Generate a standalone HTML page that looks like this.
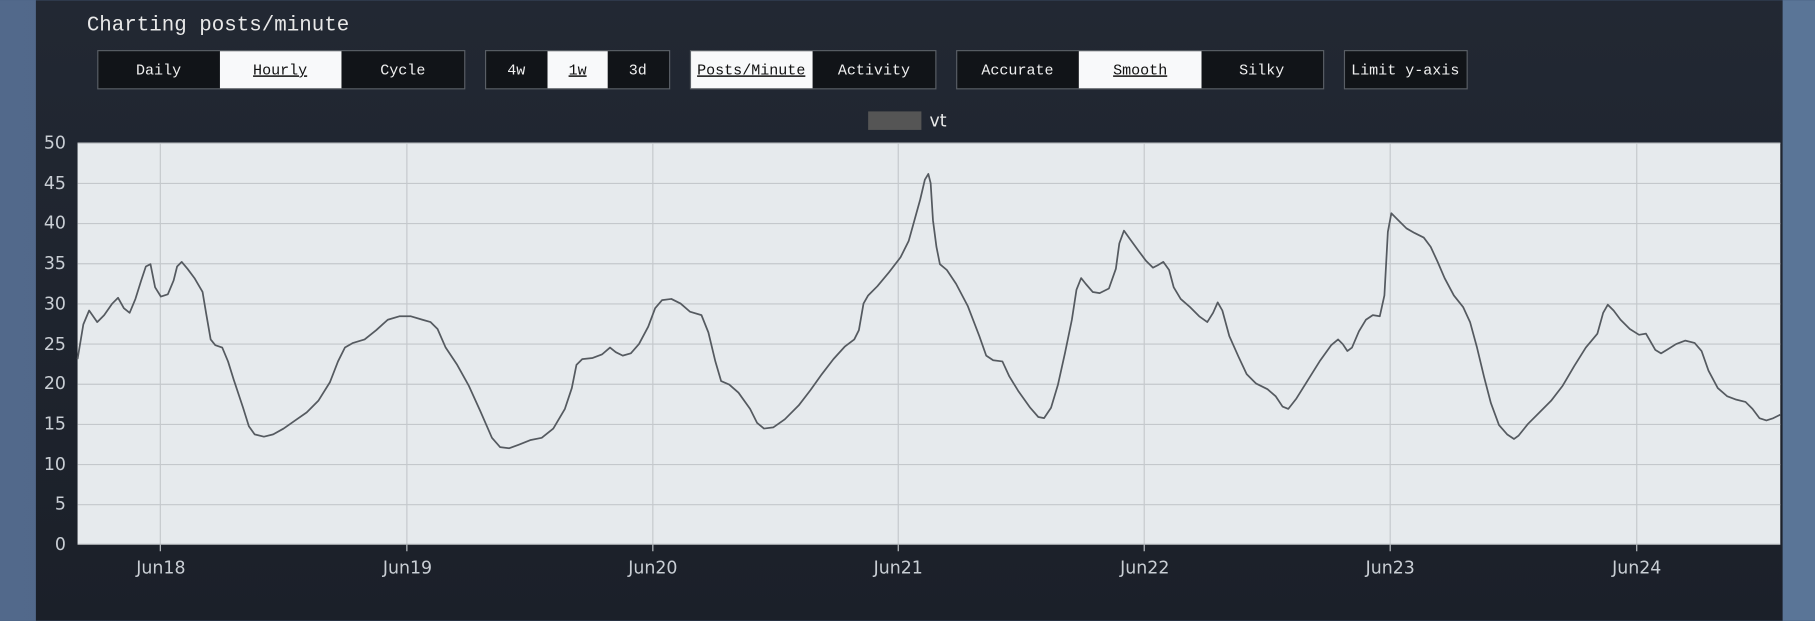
<!DOCTYPE html>
<html><head><meta charset="utf-8"><style>
html,body{margin:0;padding:0;width:1815px;height:621px;overflow:hidden;background:#4b6284}
svg{display:block}
</style></head><body>
<svg width="1815" height="621" viewBox="0 0 1568 536" xmlns="http://www.w3.org/2000/svg">
<defs>
<linearGradient id="bg" x1="0" x2="1" y1="0" y2="0"><stop offset="0" stop-color="#52698b"/><stop offset="1" stop-color="#3f5677"/></linearGradient>
<linearGradient id="pn" x1="0" x2="0" y1="0" y2="1"><stop offset="0" stop-color="#222833"/><stop offset="1" stop-color="#1b2029"/></linearGradient>
</defs>
<rect width="1568" height="536" fill="url(#bg)"/>
<rect x="1540" width="28" height="536" fill="#5a7597"/>
<rect x="31" width="1509" height="536" fill="url(#pn)"/>
<text x="75" y="26" font-family="Liberation Mono, monospace" font-size="18" fill="#e8e8e8">Charting posts/minute</text>
<g font-family="Liberation Mono, monospace" font-size="13" text-anchor="middle">
<g stroke="#5a5f66" stroke-width="1">
<rect x="84.5" y="43.5" width="317" height="33" fill="#111418"/>
<rect x="419.5" y="43.5" width="159" height="33" fill="#111418"/>
<rect x="596.5" y="43.5" width="212" height="33" fill="#111418"/>
<rect x="826.5" y="43.5" width="317" height="33" fill="#111418"/>
<rect x="1161.5" y="43.5" width="106" height="33" fill="#111418"/>
</g>
<rect x="190" y="44" width="105" height="32" fill="#f8f9fa"/>
<rect x="473" y="44" width="52" height="32" fill="#f8f9fa"/>
<rect x="597" y="44" width="105" height="32" fill="#f8f9fa"/>
<rect x="932" y="44" width="106" height="32" fill="#f8f9fa"/>
<g fill="#f0f0f0">
<text x="137" y="64">Daily</text><text x="348" y="64">Cycle</text>
<text x="446" y="64">4w</text><text x="551" y="64">3d</text>
<text x="755" y="64">Activity</text>
<text x="879" y="64">Accurate</text><text x="1090" y="64">Silky</text>
<text x="1214" y="64">Limit y-axis</text>
</g>
<g fill="#111" text-decoration="underline">
<text x="242" y="64">Hourly</text><text x="499" y="64">1w</text>
<text x="649" y="64">Posts/Minute</text><text x="985" y="64">Smooth</text>
</g>
</g>
<rect x="750" y="96" width="46" height="16" fill="#555"/>
<text x="803" y="109" font-family="DejaVu Sans, sans-serif" font-size="15" fill="#e8e8e8">vt</text>
<rect x="67" y="123" width="1471" height="347" fill="#e6eaed"/>
<g stroke="#c4c8cc" stroke-width="1">
<line x1="67" x2="1538" y1="123.5" y2="123.5"/><line x1="67" x2="1538" y1="158.2" y2="158.2"/>
<line x1="67" x2="1538" y1="192.9" y2="192.9"/><line x1="67" x2="1538" y1="227.6" y2="227.6"/>
<line x1="67" x2="1538" y1="262.3" y2="262.3"/><line x1="67" x2="1538" y1="297" y2="297"/>
<line x1="67" x2="1538" y1="331.7" y2="331.7"/><line x1="67" x2="1538" y1="366.4" y2="366.4"/>
<line x1="67" x2="1538" y1="401.1" y2="401.1"/><line x1="67" x2="1538" y1="435.8" y2="435.8"/>
<line x1="138.5" x2="138.5" y1="123" y2="476"/><line x1="351.5" x2="351.5" y1="123" y2="476"/>
<line x1="564" x2="564" y1="123" y2="476"/><line x1="776" x2="776" y1="123" y2="476"/>
<line x1="988.5" x2="988.5" y1="123" y2="476"/><line x1="1201" x2="1201" y1="123" y2="476"/>
<line x1="1414" x2="1414" y1="123" y2="476"/>
</g>
<line x1="67" x2="1538" y1="470" y2="470" stroke="#b0b4b8"/>
<g font-family="DejaVu Sans, sans-serif" font-size="15" fill="#c9ced4" text-anchor="end">
<text x="57" y="128">50</text><text x="57" y="163">45</text><text x="57" y="197">40</text>
<text x="57" y="232">35</text><text x="57" y="267">30</text><text x="57" y="302">25</text>
<text x="57" y="336">20</text><text x="57" y="371">15</text><text x="57" y="406">10</text>
<text x="57" y="440">5</text><text x="57" y="475">0</text>
</g>
<g font-family="DejaVu Sans, sans-serif" font-size="15" fill="#c9ced4" text-anchor="middle">
<text x="139" y="495">Jun18</text><text x="352" y="495">Jun19</text><text x="564" y="495">Jun20</text>
<text x="776" y="495">Jun21</text><text x="989" y="495">Jun22</text><text x="1201" y="495">Jun23</text>
<text x="1414" y="495">Jun24</text>
</g>
<polyline fill="none" stroke="#555a60" stroke-width="1.5" stroke-linejoin="round" points="67,310 72,280 77,268 84,278 90,272 97,262 102,257 107,266 112,270 117,258 122,242 126,230 130,228 134,248 139,256 145,254 150,242 153,230 157,226 162,232 168,240 175,252 178,270 182,293 186,298 192,300 197,312 202,328 210,352 215,368 220,375 228,377 236,375 245,370 255,363 265,356 275,346 285,330 292,312 298,300 305,296 315,293 325,285 335,276 345,273 355,273 365,276 372,278 378,284 385,300 395,315 405,333 415,355 425,378 432,386 440,387 448,384 458,380 468,378 478,370 488,353 494,335 498,315 503,310 512,309 520,306 527,300 532,304 538,307 545,305 552,297 560,282 566,266 572,259 580,258 588,262 596,269 606,272 612,287 618,312 623,329 630,332 638,339 648,353 654,365 660,370 668,369 678,362 690,350 700,337 710,323 720,310 730,299 738,293 742,285 746,262 750,255 758,247 768,235 778,222 785,208 790,190 795,172 799,155 802,150 804,158 806,190 809,213 812,228 818,233 826,245 836,264 846,290 852,307 858,311 866,312 872,325 880,338 890,352 897,360 902,361 908,352 914,332 920,305 926,276 930,250 934,240 938,245 944,252 950,253 958,249 964,232 967,210 971,199 976,206 984,217 990,225 996,231 1000,229 1005,226 1010,233 1014,248 1020,258 1028,265 1036,273 1043,278 1048,270 1052,261 1056,268 1062,290 1070,308 1077,323 1085,331 1095,336 1102,342 1108,351 1113,353 1120,344 1130,328 1140,312 1150,298 1156,293 1160,297 1164,303 1168,300 1174,286 1180,276 1186,272 1192,273 1196,255 1199,200 1202,184 1208,190 1215,197 1222,201 1230,205 1236,213 1242,226 1248,240 1256,255 1264,265 1270,278 1276,300 1282,325 1288,348 1295,367 1302,375 1308,379 1312,376 1320,366 1330,356 1340,346 1350,333 1360,316 1370,300 1380,288 1385,270 1389,263 1394,268 1400,276 1408,284 1416,289 1422,288 1430,302 1435,305 1440,302 1448,297 1456,294 1464,296 1470,303 1476,320 1484,335 1492,342 1500,345 1508,347 1514,353 1520,361 1526,363 1532,361 1538,358"/>
</svg>
</body></html>
